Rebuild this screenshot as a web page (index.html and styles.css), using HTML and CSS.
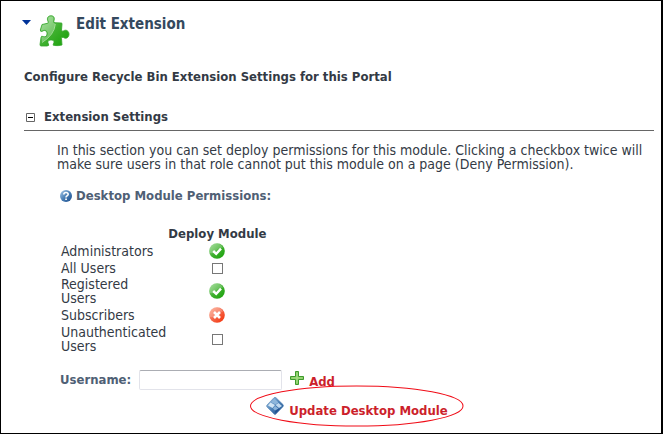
FILE: index.html
```html
<!DOCTYPE html>
<html lang="en">
<head>
<meta charset="utf-8">
<title>Edit Extension</title>
<link rel="stylesheet" href="styles.css">
</head>
<body>
<svg class="defs" aria-hidden="true">
  <defs>
    <linearGradient id="green" x1="0" y1="0" x2="1" y2="1">
      <stop offset="0" stop-color="#8fd884"/><stop offset=".5" stop-color="#3fb02f"/><stop offset="1" stop-color="#15a005"/>
    </linearGradient>
    <linearGradient id="red" x1="0" y1="0" x2="1" y2="1">
      <stop offset="0" stop-color="#ffa488"/><stop offset=".5" stop-color="#f4674a"/><stop offset="1" stop-color="#f52a00"/>
    </linearGradient>
    <linearGradient id="blue" x1="0" y1="0" x2="1" y2="1">
      <stop offset="0" stop-color="#a9cbea"/><stop offset=".5" stop-color="#4a7fb5"/><stop offset="1" stop-color="#184a8a"/>
    </linearGradient>
    <symbol id="granted" viewBox="0 0 16 16">
      <circle cx="8" cy="8" r="7.8" fill="url(#green)"/>
      <path d="M1 10a7 7 0 0 1 13-5.500Q9 5 7 8T1 10z" fill="#fff" opacity=".22"/>
      <path d="M4.200 8 7.200 10.800 12 5.700" fill="none" stroke="#fff" stroke-width="2.500"/>
    </symbol>
    <symbol id="denied" viewBox="0 0 16 16">
      <circle cx="8" cy="8" r="7.800" fill="url(#red)"/>
      <path d="M1 10a7 7 0 0 1 13-5.500Q9 5 7 8T1 10z" fill="#fff" opacity=".22"/>
      <path d="M5 5l6 6M11 5l-6 6" fill="none" stroke="#fff" stroke-width="2.600"/>
    </symbol>
  </defs>
</svg>
<main class="panel">
  <header class="title-bar">
    <button class="menu-arrow" type="button" aria-label="Module actions"><svg width="9" height="5" viewBox="0 0 9 5"><path d="M0 0h9L4.500 5z" fill="#003399"/></svg></button>
    <svg class="puzzle" width="32" height="32" viewBox="0 0 32 32" aria-hidden="true">
      <path d="M3 9.500 8.500 8.300Q9.500 8 9 6.500C7.500 3 9 .8 12 .8S16 3 14.800 6.200Q14.500 7.700 16 7.700L22.500 8Q23 8 23 9L22.500 15Q22.500 17 24.300 16C27 14 30 16 30 19.200S27 24.500 24.500 22.500Q22.500 21.500 22.500 23.500L23 30Q19 31 15.500 30.500Q13.500 30.500 14.300 29C16 26.500 14.500 25 12 25S8 26.500 9.500 29Q10.500 30.800 8 31L2 31Q1 31 1 29.500L2 22.500Q2.300 20.500 4 21.500C6.500 22.500 8 20.800 8 18.500S6 14.500 3.500 16.200Q1.300 17.200 1.300 15z" fill="url(#green)" stroke="#32a329" stroke-width=".8"/>
      <path d="M3.500 10 9 8.800Q10.200 8.200 9.700 6.300C8.500 3.500 9.500 1.600 12 1.600S15 3.500 14 6.300Q13.700 8.300 15.500 8.300L16 9Q15 20 3 27L2.500 23Q3 21.300 4.300 22C7 23 8.700 21 8.700 18.500S6.500 13.500 3 15.500Q1.800 16 2 15z" fill="#fff" opacity=".28"/>
      <path d="M16.300 9Q15.300 20 3 27.500" fill="none" stroke="#c7edbf" stroke-width=".7"/>
    </svg>
    <h1>Edit Extension</h1>
  </header>
  <p class="intro">Configure Recycle Bin Extension Settings for this Portal</p>
  <section>
    <div class="section-head">
      <button class="collapse" type="button" aria-label="Collapse section"><svg width="9" height="9" viewBox="0 0 9 9"><path d="M.5 .5h8v8h-8z" fill="#fff" stroke="#666"/><path d="M2 4.500h5" stroke="#000"/></svg></button>
      <h2>Extension Settings</h2>
    </div>
    <div class="section-body">
      <p class="help">In this section you can set deploy permissions for this module. Clicking a checkbox twice will make sure users in that role cannot put this module on a page (Deny Permission).</p>
      <div class="field-label">
        <button type="button" aria-label="Help"><svg width="12" height="12" viewBox="0 0 12 12"><circle cx="6" cy="6" r="6" fill="url(#blue)"/><path d="M3.800 4.500Q3.900 2.500 6 2.500T8.200 4.300Q8.200 5.300 6.900 5.900Q6 6.400 6 7.500" fill="none" stroke="#fff" stroke-width="1.600"/><path d="M5.200 8.500h1.700v1.600H5.200z" fill="#fff"/></svg></button>
        <h3>Desktop Module Permissions:</h3>
      </div>
      <table>
        <thead><tr><td></td><th scope="col">Deploy Module</th></tr></thead>
        <tbody>
          <tr><th scope="row">Administrators</th><td><button type="button" aria-label="Administrators: granted"><svg width="16" height="16"><use href="#granted"/></svg></button></td></tr>
          <tr><th scope="row"><label for="all">All Users</label></th><td><input type="checkbox" id="all"></td></tr>
          <tr><th scope="row">Registered Users</th><td><button type="button" aria-label="Registered Users: granted"><svg width="16" height="16"><use href="#granted"/></svg></button></td></tr>
          <tr><th scope="row">Subscribers</th><td><button type="button" aria-label="Subscribers: denied"><svg width="16" height="16"><use href="#denied"/></svg></button></td></tr>
          <tr><th scope="row"><label for="unauth">Unauthenticated Users</label></th><td><input type="checkbox" id="unauth"></td></tr>
        </tbody>
      </table>
      <div class="add-user">
        <label for="username">Username:</label>
        <input type="text" id="username">
        <a href="#add"><svg width="14" height="14" viewBox="0 0 14 14" aria-hidden="true"><path d="M5.500 .5h3v5h5v3h-5v5h-3v-5h-5v-3h5z" fill="#7cc65a" stroke="#3f9a2c"/><path d="M7 1.500v11M1.500 7h11" stroke="#b0e28e"/></svg><span>Add</span></a>
      </div>
    </div>
    <div class="actions">
      <a class="update" href="#update">
        <svg width="18" height="18" viewBox="0 0 18 18" aria-hidden="true"><path d="M8 .7Q9 0 10 .7L17 7.500Q18 8.500 17 9.700L10 17Q9 18 8 17L1 10Q0 9 1 8z" fill="url(#blue)" stroke="#5786b5" stroke-width=".6"/><path d="M8.500 1.500 12.500 5.500 9.500 7.500 5 5z" fill="#8db6db"/><path d="M4.500 5.500 9 8 6.500 11 2 8.500z" fill="#d3e6f5"/><path d="M12.500 6 16 9 13 11 9.500 8z" fill="#c2daef"/><path d="M9 9 12.500 11.500 9 13.500 7 11.500z" fill="#8bb4da"/><path d="M9 14 13 11.500 14 12 9.500 16.500z" fill="#225392"/></svg>
        <span>Update Desktop Module</span>
        <svg class="ring" viewBox="0 0 212 42" preserveAspectRatio="none" aria-hidden="true"><ellipse cx="106" cy="21" rx="105.500" ry="20" fill="none" stroke="#f00b16"/></svg>
      </a>
    </div>
  </section>
</main>
</body>
</html>
```
FILE: styles.css
```css
* { box-sizing: border-box; }
body {
  margin: 0;
  background: #fff;
  color: #333a45;
  font: 13px/14px "DejaVu Sans Condensed", "DejaVu Sans", sans-serif;
}
h1, h2, h3, p { margin: 0; font-size: inherit; }
svg { display: block; }
button { display: block; padding: 0; border: 0; background: none; }
.defs { position: absolute; width: 0; height: 0; }
.panel {
  min-height: 100vh;
  padding: 14px 7px 5px 23px;
  border: 1px solid #000;
  border-right-width: 2px;
}
.title-bar { display: flex; align-items: flex-start; }
.menu-arrow { margin: 5px 8px 0 -2px; }
.puzzle { margin-right: 5px; }
h1 { font-size: 15px; line-height: 18px; color: #34495e; }
.intro { margin-top: 23px; font-weight: bold; }
.section-head {
  display: flex;
  align-items: center;
  gap: 9px;
  margin-top: 26px;
  padding: 0 2px 6px;
  border-bottom: 1px solid #666;
}
.section-body { padding: 12px 10px 0 33px; }
.help { font-size: 14px; }
.field-label { display: flex; align-items: center; gap: 4px; margin: 18px 0 0 3px; }
h3 { color: #4f6075; }
table { margin: 23px 0 0 3px; border-collapse: collapse; }
th, td { padding: 1px; text-align: center; }
tbody th { width: 107px; text-align: left; font-size: 14px; font-weight: normal; }
thead th { white-space: nowrap; }
tbody td button { margin: 0 auto; }
input[type="checkbox"] {
  display: block;
  appearance: none;
  width: 11px;
  height: 11px;
  margin: 0 auto;
  border: 1px solid #777;
}
.add-user { display: flex; align-items: center; gap: 8px; margin: 16px 0 0 3px; color: #4f6075; font-weight: bold; }
.add-user input {
  width: 143px;
  height: 20px;
  border: 1px solid #e2e3ea;
  border-top-color: #abadb3;
  border-radius: 2px;
}
a { display: flex; align-items: flex-start; gap: 5px; color: #cc1f2b; font-weight: bold; text-decoration: none; }
.add-user span { padding-top: 4px; }
.actions { display: flex; justify-content: center; margin-top: 7px; padding-left: 36px; }
.update { position: relative; }
.update span { padding-top: 7px; }
.ring { position: absolute; left: -16px; top: -12px; width: calc(100% + 32px); height: 42px; }
```
